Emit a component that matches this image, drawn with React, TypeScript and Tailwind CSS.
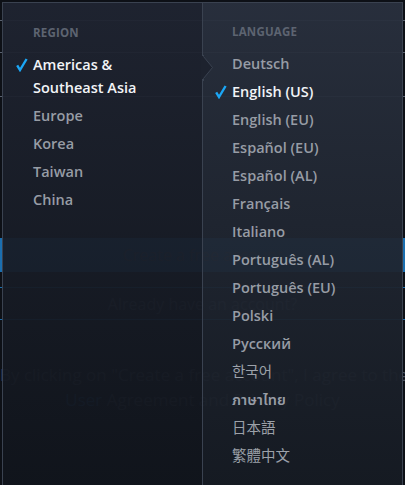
import React from 'react';

const regions = [
  { label: 'Americas & Southeast Asia', selected: true, lines: ['Americas &', 'Southeast Asia'] },
  { label: 'Europe' },
  { label: 'Korea' },
  { label: 'Taiwan' },
  { label: 'China' },
];

const languages = [
  { label: 'Deutsch' },
  { label: 'English (US)', selected: true },
  { label: 'English (EU)' },
  { label: 'Español (EU)' },
  { label: 'Español (AL)' },
  { label: 'Français' },
  { label: 'Italiano' },
  { label: 'Português (AL)' },
  { label: 'Português (EU)' },
  { label: 'Polski' },
  { label: 'Русский' },
  { label: '한국어', light: true },
  { label: 'ภาษาไทย' },
  { label: '日本語', light: true },
  { label: '繁體中文', light: true },
];

const font = { fontFamily: '"Open Sans", "Noto Sans", "Noto Sans Thai", "Noto Sans CJK TC", "Noto Sans CJK KR", sans-serif' };

function Check() {
  return (
    <svg width="12" height="14" viewBox="0 0 12 14" className="absolute left-[-17.5px] top-[7.5px]">
      <path d="M1.2 7.4 L4 12 L10.6 1" fill="none" stroke="#1ba6f5" strokeWidth="2.4" strokeLinejoin="miter" strokeLinecap="butt" />
    </svg>
  );
}

function Item({ selected, light, children }: { selected?: boolean; light?: boolean; children: React.ReactNode }) {
  return (
    <li className={'relative pt-[3px] pb-[2px] leading-[23px] text-[14.5px] ' + (selected ? 'text-[#f2f4f7] font-semibold' : light ? 'text-[#9ca1a9] font-normal' : 'text-[#979ca5] font-semibold')}>
      {selected && <Check />}
      {children}
    </li>
  );
}

function Background() {
  return (
    <div className="flex flex-col w-[405px] h-[485px] text-[#4a5260]" style={font}>
      <div className="mt-[20px] mx-[-10px] h-[33px] border border-[#5a6270]" />
      <div className="mx-[-10px] h-[44px] border-x border-b border-[#5a6270]" />
      <div className="h-[141px]" />
      <div className="mx-[-10px] h-[34px] bg-[#1b6fb0] flex items-center justify-center text-[16px] text-[#5a6a80]">Create a free account</div>
      <div className="h-[15px]" />
      <div className="mx-[-10px] h-[33px] border-y border-[#1b6fb0] flex items-center justify-center text-[16px]">Already have an account?</div>
      <div className="h-[42px]" />
      <div className="text-[17px] leading-[25px] text-center whitespace-nowrap">By clicking on "Create a free account", I agree to the Blizzard End</div>
      <div className="text-[17px] leading-[25px] text-center whitespace-nowrap"><span className="text-[#1e5a90]">User</span> Agreement and Privacy Policy</div>
    </div>
  );
}

export default function App() {
  return (
    <div className="relative w-[405px] h-[485px] overflow-hidden bg-[#0d1016]">
      <Background />
      <div className="absolute left-[2px] top-[2px] w-[401px] h-[500px] flex border-l border-t border-r border-[#3a4250]" style={font}>
        <div className="w-[200px] h-full border-r border-[#3a4250] bg-gradient-to-b from-[#1f2431]/95 to-[#10141b]/95 pl-[30px] pt-[22px]">
          <div className="text-[11.5px] leading-[16px] font-bold tracking-[0.2px] text-[#5d6471] mb-[9px]">REGION</div>
          <ul>
            {regions.map((r) => (
              <Item key={r.label} selected={r.selected}>
                {r.lines ? r.lines.map((l) => <div key={l}>{l}</div>) : r.label}
              </Item>
            ))}
          </ul>
        </div>
        <div className="flex-1 h-full bg-gradient-to-b from-[#29303e]/95 to-[#151a22]/95 pl-[29px] pt-[21px]">
          <div className="text-[11.5px] leading-[16px] font-bold tracking-[0.2px] text-[#5d6471] mb-[9px]">LANGUAGE</div>
          <ul>
            {languages.map((l) => (
              <Item key={l.label} selected={l.selected} light={l.light}>
                {l.label}
              </Item>
            ))}
          </ul>
        </div>
        <svg width="14" height="26" viewBox="0 0 14 26" className="absolute left-[198px] top-[52px]">
          <path d="M0 1 L2.5 1 L11.5 12.5 L2.5 24 L0 24 Z" fill="#1d222e" />
          <path d="M2.5 0 L2.5 1.5 L11.5 12.5 L2.5 23.5 L2.5 26" fill="none" stroke="#3a4250" strokeWidth="1" />
        </svg>
      </div>
    </div>
  );
}
